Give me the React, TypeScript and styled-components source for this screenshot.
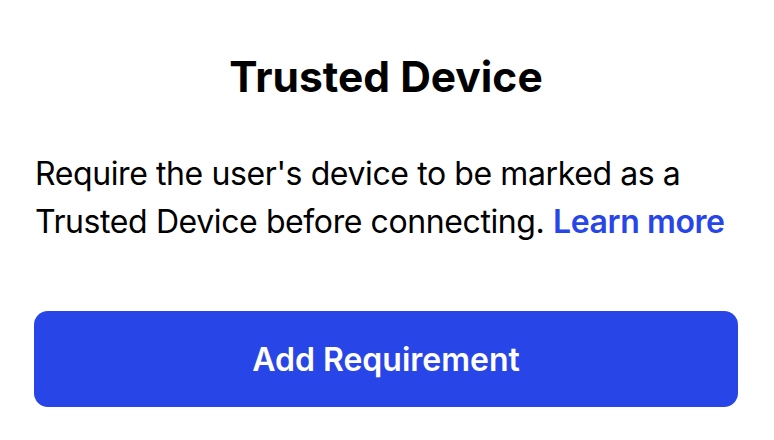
import styled, { createGlobalStyle } from 'styled-components';

const GlobalStyle = createGlobalStyle`
  html, body {
    margin: 0;
    padding: 0;
    background: #ffffff;
  }
  body {
    font-family: Inter, "Noto Sans", sans-serif;
    color: #000000;
    -webkit-font-smoothing: antialiased;
  }
`;

const Panel = styled.div`
  width: 774px;
  height: 440px;
  box-sizing: border-box;
  padding: 52px 36px 0 34px;
  display: flex;
  flex-direction: column;
`;

const Title = styled.h1`
  margin: 0;
  text-align: center;
  font-size: 42.5px;
  line-height: 50px;
  font-weight: 700;
`;

const Description = styled.p`
  margin: 48px 0 0 1px;
  font-size: 32px;
  line-height: 48px;
  font-weight: 400;
  letter-spacing: -0.4px;
`;

const LearnMore = styled.a`
  color: #2845e7;
  font-weight: 600;
  text-decoration: none;
  white-space: nowrap;
  cursor: pointer;
`;

const PrimaryButton = styled.button`
  margin-top: 65px;
  width: 704px;
  height: 96px;
  border: none;
  border-radius: 14px;
  background: #2845e7;
  color: #ffffff;
  font-family: inherit;
  font-size: 32px;
  font-weight: 600;
  cursor: pointer;
`;

export default function App() {
  return (
    <>
      <GlobalStyle />
      <Panel>
        <Title>Trusted Device</Title>
        <Description>
          Require the user's device to be marked as a Trusted Device before connecting.{' '}
          <LearnMore>Learn more</LearnMore>
        </Description>
        <PrimaryButton>Add Requirement</PrimaryButton>
      </Panel>
    </>
  );
}
